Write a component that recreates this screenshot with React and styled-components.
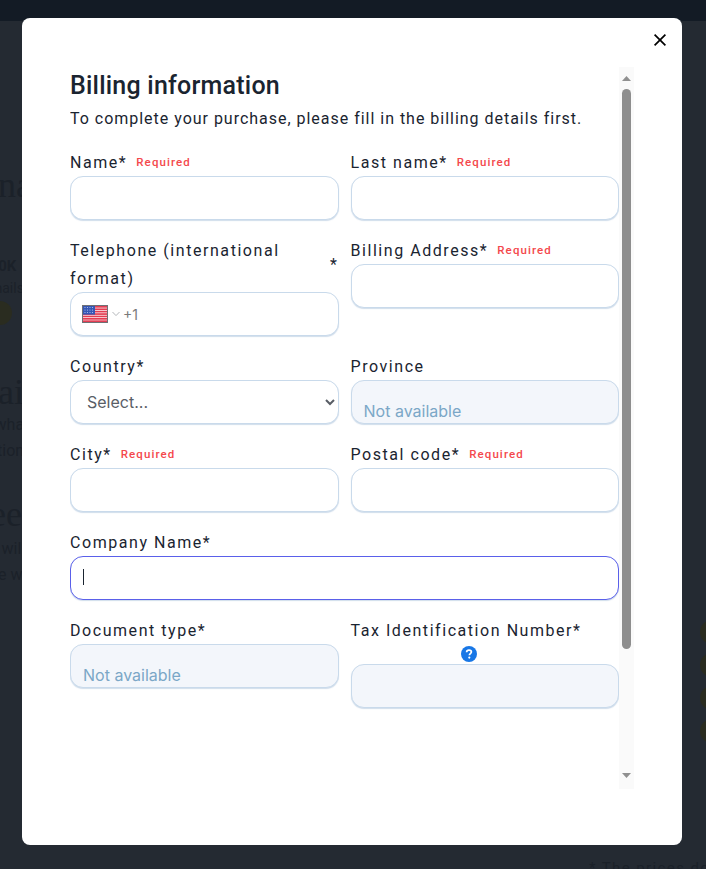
import React from 'react'
import styled, { createGlobalStyle } from 'styled-components'

const GlobalStyle = createGlobalStyle`
  html, body {
    margin: 0;
    height: 100%;
    overflow: hidden;
    background: #242a32;
  }
  * {
    box-sizing: border-box;
  }
`

const Page = styled.div`
  position: relative;
  width: 706px;
  height: 869px;
  overflow: hidden;
  background: #242a32;
  font-family: 'Liberation Serif', serif;
  color: #1b2129;
`

const TopBar = styled.div`
  height: 21px;
  background: #131b25;
`

const BehindColumn = styled.div`
  display: flex;
  flex-direction: column;
  margin-left: -28px;
`

const BehindHeading = styled.div`
  font-size: 36px;
  line-height: 40px;
  margin-top: ${p => p.top}px;
  margin-left: ${p => p.left}px;
  white-space: nowrap;
`

const BehindStat = styled.div`
  font-family: 'Roboto', sans-serif;
  font-weight: 700;
  font-size: 15px;
  line-height: 18px;
  margin-top: 52px;
  margin-left: 9px;
`

const BehindText = styled.div`
  font-family: 'Roboto', sans-serif;
  font-size: ${p => p.size || 16}px;
  line-height: 26px;
  margin-left: ${p => p.left}px;
  margin-top: ${p => p.top || 0}px;
  white-space: nowrap;
`

const BehindDot = styled.span`
  display: block;
  width: 24px;
  height: 24px;
  border-radius: 50%;
  background: #2a2c20;
  margin: 0 0 0 16px;
`

const BehindDots = styled.div`
  position: absolute;
  top: 620px;
  right: -18px;
  display: flex;
  flex-direction: column;
  gap: 9px;
`

const BehindNote = styled.div`
  position: absolute;
  top: 859px;
  left: 589px;
  font-family: 'Roboto', sans-serif;
  font-size: 15px;
  letter-spacing: 1.4px;
  white-space: nowrap;
`

const Overlay = styled.div`
  position: absolute;
  inset: 0;
  padding: 18px 24px 24px 22px;
`

const Modal = styled.div`
  position: relative;
  width: 660px;
  height: 827px;
  padding: 49px 48px 56px 48px;
  background: #fff;
  border-radius: 8px;
  font-family: 'Roboto', sans-serif;
  color: #1a2430;
`

const CloseButton = styled.button`
  position: absolute;
  top: 14px;
  right: 14px;
  width: 16px;
  height: 16px;
  padding: 0;
  border: 0;
  background: none;
  display: flex;
`

const ModalBody = styled.div`
  display: flex;
  height: 722px;
`

const Scroller = styled.div`
  flex: 1;
  min-width: 0;
  overflow: hidden;
`

const ScrollTrack = styled.div`
  flex: 0 0 15px;
  display: flex;
  flex-direction: column;
  align-items: center;
  background: #fafafa;
`

const ScrollButton = styled.div`
  flex: 0 0 22px;
  width: 15px;
  display: flex;
  justify-content: center;
  align-items: ${p => (p.down ? 'flex-start' : 'flex-end')};
  padding: ${p => (p.down ? '6px 0 0' : '0 0 8px')};
`

const ScrollThumb = styled.div`
  flex: 0 0 560px;
  width: 9px;
  background: #8e8e8e;
  border-radius: 5px;
`

const ScrollGap = styled.div`
  flex: 1;
`

const Title = styled.h2`
  margin: 0;
  font-size: 25px;
  font-weight: 500;
  line-height: 37px;
  letter-spacing: 0.22px;
`

const Subtitle = styled.p`
  margin: 0 0 14px;
  font-size: 16px;
  line-height: 30px;
  letter-spacing: 0.98px;
`

const FormGrid = styled.div`
  display: grid;
  grid-template-columns: 1fr 1fr;
  column-gap: 12px;
  row-gap: 16px;
  align-items: start;
`

const Field = styled.div`
  grid-column: ${p => (p.wide ? '1 / -1' : 'auto')};
  min-width: 0;
`

const LabelRow = styled.label`
  display: flex;
  align-items: center;
  justify-content: space-between;
  padding-top: 1px;
  margin-bottom: -1px;
  font-size: 16px;
  line-height: 28px;
  letter-spacing: 1.55px;
`

const LabelLeft = styled.span`
  display: flex;
  align-items: center;
  gap: 9px;
`

const LabelText = styled.span`
  max-width: 240px;
`

const RequiredTag = styled.span`
  color: #f4484c;
  font-size: 11.5px;
  line-height: 14px;
  font-weight: 500;
  letter-spacing: 1.1px;
  position: relative;
  top: -1px;
`

const HelpLine = styled.div`
  height: 20px;
  padding-left: 110px;
  display: flex;
  align-items: center;
`

const TextInput = styled.input`
  display: block;
  width: 100%;
  height: 44px;
  padding: ${p => (p.disabled ? '18px 12px 0' : '0 12px')};
  border: 1px solid ${p => (p.active ? '#5a60ea' : '#c9daeb')};
  border-radius: 13px;
  outline: none;
  background: ${p => (p.disabled ? '#f3f6fb' : '#fff')};
  box-shadow: 0 1px 1px rgba(150, 180, 210, 0.45);
  font-family: 'Inter', sans-serif;
  font-size: 16px;
  color: #7ba7c7;
  -webkit-text-fill-color: #7ba7c7;
  opacity: 1;
`

const FocusWrap = styled.div`
  position: relative;
`

const Caret = styled.span`
  position: absolute;
  left: 13px;
  top: 13px;
  width: 1px;
  height: 16px;
  background: #1a2430;
`

const PhoneBox = styled.div`
  display: flex;
  align-items: center;
  height: 44px;
  padding: 0 11px;
  border: 1px solid #c9daeb;
  border-radius: 13px;
  background: #fff;
  box-shadow: 0 1px 1px rgba(150, 180, 210, 0.45);
`

const DialCode = styled.span`
  font-family: 'Inter', sans-serif;
  font-size: 14px;
  color: #7a7a7a;
  margin-left: 2px;
`

const SelectInput = styled.select`
  display: block;
  width: 100%;
  height: 44px;
  padding: 0 12px;
  border: 1px solid #c9daeb;
  border-radius: 13px;
  outline: none;
  background: #fff;
  box-shadow: 0 1px 1px rgba(150, 180, 210, 0.45);
  font-family: 'Inter', sans-serif;
  font-size: 16px;
  color: #595e66;
`

const UsFlag = () => (
  <svg width="26" height="18" viewBox="0 0 26 18">
    <rect width="26" height="18" fill="#6f7075" />
    <rect x="1" y="1" width="24" height="16" fill="#fff" />
    {[1, 3.4, 5.8, 8.2, 10.6, 13, 15.3].map(y => (
      <rect key={y} x="1" y={y} width="24" height="1.7" fill="#e33d52" />
    ))}
    <rect x="1" y="1" width="12" height="8.6" fill="#3557b5" />
    {[3, 5.5, 8, 10.5].map(x =>
      [2.5, 5, 7.5].map(y => <circle key={`${x}-${y}`} cx={x} cy={y} r="0.6" fill="#b9c8ee" />)
    )}
  </svg>
)

const SmallChevron = () => (
  <svg width="10" height="6" viewBox="0 0 10 6" style={{ marginLeft: 3 }}>
    <path d="M1.5 1 L5 4.6 L8.5 1" fill="none" stroke="#b4b7bb" strokeWidth="1" />
  </svg>
)

const HelpIcon = () => (
  <svg width="16" height="16" viewBox="0 0 16 16">
    <circle cx="8" cy="8" r="8" fill="#1877e6" />
    <path
      d="M5.6 6.2 C5.7 4.8 6.7 4.1 8 4.1 C9.4 4.1 10.4 4.9 10.4 6.1 C10.4 7.6 8.4 7.6 8.4 9.2"
      fill="none"
      stroke="#fff"
      strokeWidth="1.7"
    />
    <circle cx="8.3" cy="11.6" r="1.1" fill="#fff" />
  </svg>
)

const CloseIcon = () => (
  <svg width="16" height="16" viewBox="0 0 16 16">
    <path d="M2.6 2.6 L13.4 13.4 M13.4 2.6 L2.6 13.4" fill="none" stroke="#000" strokeWidth="1.7" />
  </svg>
)

const ArrowIcon = ({ down }) => (
  <svg width="9" height="5" viewBox="0 0 9 5">
    <path d={down ? 'M0 0 L9 0 L4.5 5 Z' : 'M4.5 0 L9 5 L0 5 Z'} fill="#909090" />
  </svg>
)

const Label = ({ text, required }) => (
  <LabelRow>
    <LabelLeft>
      <span>{text}</span>
      {required && <RequiredTag>Required</RequiredTag>}
    </LabelLeft>
  </LabelRow>
)

const App = () => (
  <>
    <GlobalStyle />
    <Page>
      <TopBar />
      <BehindColumn>
        <BehindHeading top={144} left={0}>
          Una
        </BehindHeading>
        <BehindStat>100K</BehindStat>
        <BehindText left={10} size={14}>
          Emails
        </BehindText>
        <BehindDot />
        <BehindHeading top={47} left={-12}>
          Spai
        </BehindHeading>
        <BehindText left={0}>So what</BehindText>
        <BehindText left={0}>section</BehindText>
        <BehindHeading top={30} left={-12}>
          Inee
        </BehindHeading>
        <BehindText left={16} top={2}>
          It will
        </BehindText>
        <BehindText left={12}>We w</BehindText>
      </BehindColumn>
      <BehindDots>
        <BehindDot />
        <BehindDot />
        <BehindDot />
        <BehindDot />
      </BehindDots>
      <BehindNote>* The prices do not</BehindNote>

      <Overlay>
        <Modal>
          <CloseButton aria-label="Close">
            <CloseIcon />
          </CloseButton>
          <ModalBody>
            <Scroller>
              <Title>Billing information</Title>
              <Subtitle>To complete your purchase, please fill in the billing details first.</Subtitle>
              <FormGrid>
                <Field>
                  <Label text="Name*" required />
                  <TextInput />
                </Field>
                <Field>
                  <Label text="Last name*" required />
                  <TextInput />
                </Field>
                <Field>
                  <LabelRow>
                    <LabelText>Telephone (international format)</LabelText>
                    <span>*</span>
                  </LabelRow>
                  <PhoneBox>
                    <UsFlag />
                    <SmallChevron />
                    <DialCode>+1</DialCode>
                  </PhoneBox>
                </Field>
                <Field>
                  <Label text="Billing Address*" required />
                  <TextInput />
                </Field>
                <Field>
                  <Label text="Country*" />
                  <SelectInput defaultValue="">
                    <option value="">Select...</option>
                  </SelectInput>
                </Field>
                <Field>
                  <Label text="Province" />
                  <TextInput disabled value="Not available" readOnly />
                </Field>
                <Field>
                  <Label text="City*" required />
                  <TextInput />
                </Field>
                <Field>
                  <Label text="Postal code*" required />
                  <TextInput />
                </Field>
                <Field wide>
                  <Label text="Company Name*" />
                  <FocusWrap>
                    <TextInput active />
                    <Caret />
                  </FocusWrap>
                </Field>
                <Field>
                  <Label text="Document type*" />
                  <TextInput disabled value="Not available" readOnly />
                </Field>
                <Field>
                  <Label text="Tax Identification Number*" />
                  <HelpLine>
                    <HelpIcon />
                  </HelpLine>
                  <TextInput disabled />
                </Field>
              </FormGrid>
            </Scroller>
            <ScrollTrack>
              <ScrollButton>
                <ArrowIcon />
              </ScrollButton>
              <ScrollThumb />
              <ScrollGap />
              <ScrollButton down>
                <ArrowIcon down />
              </ScrollButton>
            </ScrollTrack>
          </ModalBody>
        </Modal>
      </Overlay>
    </Page>
  </>
)

export default App
